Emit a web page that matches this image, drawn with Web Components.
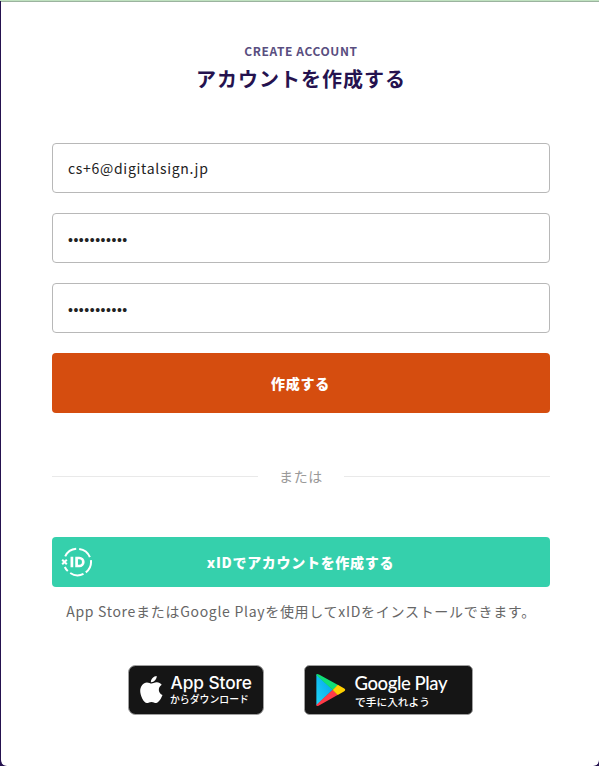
<!DOCTYPE html>
<html lang="ja">
<head>
<meta charset="utf-8">
<title>アカウントを作成する</title>
<style>
    html, body {
        margin: 0;
        height: 100%;
        overflow: hidden;
        background: #25124f;
    }

    body {
        font-family: "Noto Sans CJK JP", "Noto Sans", sans-serif;
        font-size: 14px;
        letter-spacing: 0.05em;
        color: #222;
    }
</style>
</head>
<body>
<account-page>
    <page-heading caption="CREATE ACCOUNT">アカウントを作成する</page-heading>
    <form-field>cs+6@digitalsign.jp</form-field>
    <form-field masked>•••••••••••</form-field>
    <form-field masked>•••••••••••</form-field>
    <action-button>作成する</action-button>
    <or-divider>または</or-divider>
    <action-button class="xid" style="--bg: #35d0ac; --height: 50px">
        <xid-logo slot="icon"></xid-logo>xIDでアカウントを作成する
    </action-button>
    <help-text>App StoreまたはGoogle Playを使用してxIDをインストールできます。</help-text>
    <store-links>
        <app-store-badge></app-store-badge>
        <google-play-badge></google-play-badge>
    </store-links>
</account-page>

<script>
function define(name, html, setup) {
    const tmpl = document.createElement('template');
    tmpl.innerHTML = html;

    window.customElements.define(name, class extends HTMLElement {
        constructor() {
            super();
            const shadowRoot = this.attachShadow({mode: 'open'});
            shadowRoot.appendChild(tmpl.content.cloneNode(true));
            if (setup) {
                setup(this, shadowRoot);
            }
        }
    });
}

define('account-page', `
    <style>
        :host {
            display: block;
            box-sizing: border-box;
            height: 766px;
            padding-left: 1px;
            border-top: 1px solid #c0e2c0;
        }
        .card {
            display: flex;
            flex-direction: column;
            box-sizing: border-box;
            height: 765px;
            padding: 40px 49px 0 51px;
            border-top: 1px solid #9bb39f;
            border-radius: 0 0 6px 6px;
            background: #fff;
        }
    </style>
    <div class="card"><slot></slot></div>
`);

define('page-heading', `
    <style>
        :host {
            display: flex;
            flex-direction: column;
            align-items: center;
            height: 101px;
        }
        .caption {
            height: 18px;
            line-height: 18px;
            font-size: 12px;
            font-weight: 700;
            letter-spacing: 0.6px;
            color: #594e80;
        }
        h1 {
            margin: 4px 0 0;
            font-size: 20px;
            line-height: 30px;
            font-weight: 700;
            letter-spacing: 1px;
            color: #25124f;
        }
    </style>
    <div class="caption"></div>
    <h1><slot></slot></h1>
`, (el, root) => {
    root.querySelector('.caption').textContent = el.getAttribute('caption');
});

define('form-field', `
    <style>
        :host {
            display: flex;
            align-items: center;
            box-sizing: border-box;
            height: 50px;
            margin-bottom: 20px;
            padding: 0 15px;
            border: 1px solid #b8b8b8;
            border-radius: 4px;
        }
        :host([masked]) {
            font-family: "Liberation Sans", Arial, sans-serif;
            letter-spacing: 0.53px;
            padding-top: 3px;
        }
    </style>
    <slot></slot>
`);

define('action-button', `
    <style>
        :host {
            display: grid;
            grid-template-columns: 49px 1fr 50px;
            align-items: center;
            height: var(--height, 60px);
            border-radius: 4px;
            background: var(--bg, #d54d0f);
            color: #fff;
            font-weight: 900;
            line-height: 20px;
        }
        .icon {
            display: flex;
            justify-content: center;
        }
        .label {
            text-align: center;
        }
    </style>
    <div class="icon"><slot name="icon"></slot></div>
    <div class="label"><slot></slot></div>
`);

define('or-divider', `
    <style>
        :host {
            display: flex;
            align-items: center;
            gap: 20.5px;
            height: 20px;
            margin: 53px 0 51px;
            line-height: 20px;
            color: #999;
        }
        :host::before, :host::after {
            content: "";
            flex: 1;
            height: 1px;
            background: #e9e9e9;
        }
    </style>
    <slot></slot>
`);

define('help-text', `
    <style>
        :host {
            display: block;
            margin-top: 13px;
            height: 22px;
            line-height: 22px;
            text-align: center;
            white-space: nowrap;
            color: #666;
        }
    </style>
    <slot></slot>
`);

define('xid-logo', `
    <style>
        :host, svg {
            display: block;
        }
    </style>
    <svg width="32" height="30" viewBox="0 0 32 30">
        <g fill="none" stroke="#fff" stroke-width="2">
            <path d="M4.2 9.4A13.2 13.2 0 0 1 15.2 1.8M18.2 1.9A13.2 13.2 0 0 1 28.9 10.2M29.9 13.2A13.2 13.2 0 0 1 24.8 25.4M22.5 26.9A13.2 13.2 0 0 1 9.2 26M6.8 24.1A13.2 13.2 0 0 1 3.8 20"/>
            <path d="M1.2 12.7l4.6 4.6M5.8 12.7l-4.6 4.6"/>
            <path stroke-width="2.7" d="M10.9 9.7v10.6M15.6 11v8h2.7a4 4 0 0 0 0-8h-4"/>
        </g>
    </svg>
`);

define('store-links', `
    <style>
        :host {
            display: flex;
            gap: 40px;
            margin: 43px 0 0 76px;
        }
    </style>
    <slot></slot>
`);

const badgeStyle = `
    <style>
        :host, svg {
            display: block;
        }
        text {
            fill: #fff;
            letter-spacing: 0;
        }
        .ja {
            font-family: "Noto Sans CJK JP", sans-serif;
            font-size: 10.5px;
            font-weight: 500;
        }
    </style>
`;

define('app-store-badge', badgeStyle + `
    <svg width="136" height="50" viewBox="0 0 136 50">
        <rect x=".5" y=".5" width="135" height="49" rx="7" fill="#151515" stroke="#a0a0a0"/>
        <path fill="#fff" d="M28.7 11c.2 3.2-2.7 6.4-5.8 6.2-.3-3.1 2.8-6.1 5.8-6.2zM23.5 18.6c1.1 0 3-1.4 5.4-1.3 1.9.1 3.7.9 4.8 2.5-4.3 2.7-3.5 8.5.8 10.3-.9 2.7-3.7 7.9-6.4 7.9-1.7 0-2.6-1.1-4.6-1.1s-3 1.1-4.6 1.1c-3.2 0-6.7-7.4-6.7-12 0-5 3.1-8.5 6.7-8.6 1.9 0 3.5 1.2 4.6 1.2z"/>
        <text x="42.5" y="23.8" font-family="Inter, sans-serif" font-size="17.3" font-weight="500" textLength="81.5">App Store</text>
        <text class="ja" x="42" y="38" textLength="79" lengthAdjust="spacingAndGlyphs" style="font-size: 10px">からダウンロード</text>
    </svg>
`);

define('google-play-badge', badgeStyle + `
    <svg width="169" height="50" viewBox="0 0 169 50">
        <defs>
            <linearGradient id="blue" x1="1" y1="0" x2="0" y2="1">
                <stop offset="0" stop-color="#00a0ed"/>
                <stop offset="1" stop-color="#20d5f6"/>
            </linearGradient>
        </defs>
        <rect x=".5" y=".5" width="168" height="49" rx="5" fill="#151515" stroke="#a0a0a0"/>
        <g transform="translate(-.6 0)">
            <path fill="url(#blue)" d="M13 9.5v31l16.5-15.7z"/>
            <path fill="#10df76" d="M12.8 10c.3-1.3 1.4-1.3 2.8-.5l19 10.4-5.3 5.1z"/>
            <path fill="#ff3b48" d="M12.8 40c.3 1.3 1.4 1.3 2.8.5l19-10.7-5.3-5z"/>
            <path fill="#ffd000" d="M34.4 19.8l6.1 3.5c1.8 1 1.8 2.2 0 3.2l-6.1 3.5-5.2-5z"/>
        </g>
        <text x="50.5" y="24.7" font-family="Lato, sans-serif" font-size="18.5" font-weight="500" textLength="93">Google Play</text>
        <text class="ja" x="51" y="41" textLength="75" lengthAdjust="spacingAndGlyphs">で手に入れよう</text>
    </svg>
`);
</script>
</body>
</html>
